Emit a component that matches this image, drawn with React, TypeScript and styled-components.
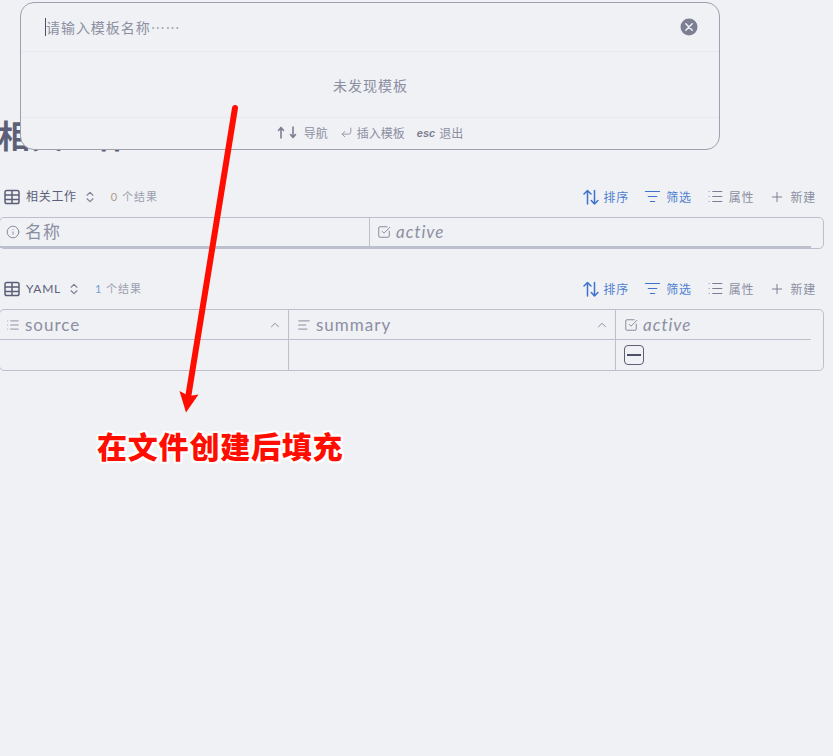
import React from "react";
import styled, { createGlobalStyle } from "styled-components";
import { ChevronsUpDown, ListFilter, List, Plus, Info, SquareCheckBig, AlignLeft, ChevronUp, CornerDownLeft } from "lucide-react";

const GlobalStyle = createGlobalStyle`
  html, body { margin: 0; padding: 0; background: #eff1f5; height: 100%; overflow: hidden; }
  body { font-family: "Lato", "Noto Sans CJK SC", sans-serif; color: #4c4f69; }
`;

const Page = styled.div`
  position: relative;
  width: 833px;
  height: 756px;
  overflow: hidden;
  background: #eff1f5;
`;

const Content = styled.main`
  display: flex;
  flex-direction: column;
  margin-left: -1px;
  margin-right: 9px;
  padding-top: 111px;
`;

const Heading = styled.h1`
  margin: 0 0 0 -1px;
  height: 47px;
  font: 700 32px/47px "Noto Sans CJK SC", sans-serif;
  letter-spacing: 1px;
  color: #5c5f77;
`;

const Toolbar = styled.div<{ $gap: number }>`
  display: flex;
  align-items: center;
  justify-content: space-between;
  height: 41px;
  margin-top: ${p => p.$gap}px;
  padding: 0 8px 0 5px;
`;

const ToolGroup = styled.div`
  display: flex;
  align-items: center;
`;

const ViewName = styled.span`
  margin-left: 6px;
  font: 400 12px/16px "Lato", "Noto Sans CJK SC", sans-serif;
  letter-spacing: 0.7px;
  color: #5c5f77;
`;

const Switcher = styled(ChevronsUpDown)`
  margin-left: 6px;
  color: #7c7f93;
`;

const Count = styled.span<{ $tint: string }>`
  margin-left: 14px;
  font: 400 11px/16px "Lato", "Noto Sans CJK SC", sans-serif;
  letter-spacing: 1px;
  color: #9ca0b0;
  & > b { font-weight: 400; color: ${p => p.$tint}; }
`;

const Action = styled.span<{ $active?: boolean; $gap: number }>`
  display: inline-flex;
  align-items: center;
  gap: 5px;
  margin-left: ${p => p.$gap}px;
  font: 400 12px/16px "Noto Sans CJK SC", sans-serif;
  letter-spacing: 0.8px;
  color: ${p => (p.$active ? "#4f7fd0" : "#8c8fa1")};
  & > svg { color: ${p => (p.$active ? "#3f72cc" : "#7c7f93")}; }
`;

const TableBox = styled.section`
  border: 1px solid #bcc0cc;
  border-radius: 5px;
  padding-right: 12px;
`;

const Row = styled.div<{ $cols: string; $h: number; $rule?: number }>`
  display: grid;
  grid-template-columns: ${p => p.$cols};
  height: ${p => p.$h}px;
  border-bottom: ${p => p.$rule ?? 0}px solid #bcc0cc;
`;

const HeaderCell = styled.div<{ $divider?: boolean; $inset?: number }>`
  display: flex;
  align-items: center;
  padding: 0 6px 0 ${p => p.$inset ?? 7}px;
  gap: 5px;
  border-right: ${p => (p.$divider ? "1px solid #bcc0cc" : "none")};
  color: #8c8fa1;
  font: 400 17px/22px "Lato", "Noto Sans CJK SC", sans-serif;
  letter-spacing: 1px;
  & > svg:first-child { color: #7c7f93; }
`;

const SortCaret = styled(ChevronUp)`
  margin-left: auto;
  color: #7c7f93;
`;

const ItalicLabel = styled.span`
  font-style: italic;
`;

const BodyCell = styled.div<{ $divider?: boolean }>`
  display: flex;
  align-items: center;
  padding-left: 8px;
  border-right: ${p => (p.$divider ? "1px solid #bcc0cc" : "none")};
`;

const MixedBox = styled.span`
  display: flex;
  align-items: center;
  justify-content: center;
  width: 18px;
  height: 18px;
  border: 1px solid #5c5f77;
  border-radius: 4px;
  &::before {
    content: "";
    width: 14px;
    height: 2px;
    background: #4c4f69;
  }
`;

const Modal = styled.div`
  position: absolute;
  left: 20px;
  top: 2px;
  width: 698px;
  height: 146px;
  display: flex;
  flex-direction: column;
  background: #eff1f5;
  border: 1px solid #9ca0b0;
  border-radius: 14px;
`;

const SearchRow = styled.div`
  display: flex;
  align-items: center;
  justify-content: space-between;
  height: 48px;
  padding: 0 21px 0 24px;
  border-bottom: 1px solid #e6e9ef;
`;

const Placeholder = styled.span`
  border-left: 1px solid #4c4f69;
  height: 18px;
  font: 400 14px/18px "Noto Sans CJK SC", sans-serif;
  letter-spacing: 0.95px;
  color: #8c8fa1;
`;

const EmptyRow = styled.div`
  display: flex;
  align-items: center;
  justify-content: center;
  height: 65px;
  padding-left: 1px;
  border-bottom: 1px solid #e6e9ef;
  font: 400 14px/20px "Noto Sans CJK SC", sans-serif;
  letter-spacing: 1px;
  color: #8c8fa1;
`;

const Hints = styled.div`
  flex: 1;
  display: flex;
  align-items: center;
  justify-content: center;
  gap: 12px;
  padding-bottom: 2px;
  font: 400 12px/14px "Noto Sans CJK SC", sans-serif;
  color: #8c8fa1;
`;

const Hint = styled.span`
  display: inline-flex;
  align-items: center;
  gap: 4px;
`;

const Keys = styled.svg`
  margin-right: 2px;
  color: #7c7f93;
`;

const EscKey = styled.b`
  font: italic 700 11px/14px "Liberation Sans", sans-serif;
  color: #7c7f93;
`;

const ArrowLayer = styled.svg`
  position: absolute;
  left: 0;
  top: 0;
  pointer-events: none;
`;

const Note = styled.div`
  position: absolute;
  left: 97px;
  top: 424px;
  font: 900 30px/42px "Noto Sans CJK SC", sans-serif;
  letter-spacing: 0.8px;
  white-space: nowrap;
  color: #ff0d00;
  text-shadow: 2px 0 0 #fff, -2px 0 0 #fff, 0 2px 0 #fff, 0 -2px 0 #fff, 2px 2px 0 #fff, -2px -2px 0 #fff, 2px -2px 0 #fff, -2px 2px 0 #fff;
`;

const TableIcon = () => (
  <svg width="16" height="16" viewBox="0 0 16 16" fill="none" stroke="#5c5f77" strokeWidth="1.5">
    <rect x="1" y="1.5" width="14" height="13" rx="1.8" />
    <path d="M1 6h14M1 10.5h14M8 1.5v13" />
  </svg>
);

const SortIcon = () => (
  <svg width="16" height="16" viewBox="0 0 16 16" fill="none" stroke="currentColor" strokeWidth="1.5" strokeLinecap="round" strokeLinejoin="round">
    <path d="M4.5 15V1.5M1 5 4.5 1.5 8 5" />
    <path d="M11.5 1.5V15M8.3 11.5l3.2 3.5 3.4-3.5" />
  </svg>
);

const ClearIcon = () => (
  <svg width="18" height="18" viewBox="0 0 18 18">
    <circle cx="9" cy="9" r="8.5" fill="#7c7f93" />
    <path d="M5.8 5.8l6.4 6.4M12.2 5.8l-6.4 6.4" stroke="#eff1f5" strokeWidth="1.5" strokeLinecap="round" />
  </svg>
);

const NavKeys = () => (
  <Keys width="21" height="13" viewBox="0 0 21 13" fill="none" stroke="currentColor" strokeWidth="1.6" strokeLinecap="round" strokeLinejoin="round">
    <path d="M4 12V1.5M1.5 4.5 4 1.5 6.5 4.5" />
    <path d="M16 1V11.5M13.5 8.5 16 11.5 18.5 8.5" />
  </Keys>
);

const Actions = () => (
  <ToolGroup>
    <Action $active $gap={0}><SortIcon />排序</Action>
    <Action $active $gap={15}><ListFilter size={17} strokeWidth={1.6} />筛选</Action>
    <Action $gap={15}><List size={17} strokeWidth={1.5} />属性</Action>
    <Action $gap={15}><Plus size={16} strokeWidth={1.5} />新建</Action>
  </ToolGroup>
);

export default function App() {
  return (
    <Page>
      <GlobalStyle />
      <Content>
        <Heading>相关工作</Heading>
        <Toolbar $gap={18}>
          <ToolGroup>
            <TableIcon />
            <ViewName>相关工作</ViewName>
            <Switcher size={14} />
            <Count $tint="#b59a86"><b>0</b> 个结果</Count>
          </ToolGroup>
          <Actions />
        </Toolbar>
        <TableBox>
          <Row $cols="370px 1fr" $h={28} $rule={2}>
            <HeaderCell $divider $inset={6}><Info size={14} strokeWidth={1.5} />名称</HeaderCell>
            <HeaderCell><SquareCheckBig size={14} strokeWidth={1.5} /><ItalicLabel>active</ItalicLabel></HeaderCell>
          </Row>
        </TableBox>
        <Toolbar $gap={19}>
          <ToolGroup>
            <TableIcon />
            <ViewName>YAML</ViewName>
            <Switcher size={14} />
            <Count $tint="#6f9fd0"><b>1</b> 个结果</Count>
          </ToolGroup>
          <Actions />
        </Toolbar>
        <TableBox>
          <Row $cols="289px 327px 1fr" $h={29} $rule={1}>
            <HeaderCell $divider $inset={6}><List size={14} strokeWidth={1.4} />source<SortCaret size={14} strokeWidth={1.5} /></HeaderCell>
            <HeaderCell $divider $inset={8}><AlignLeft size={14} strokeWidth={1.5} />summary<SortCaret size={14} strokeWidth={1.5} /></HeaderCell>
            <HeaderCell $inset={8}><SquareCheckBig size={14} strokeWidth={1.5} /><ItalicLabel>active</ItalicLabel></HeaderCell>
          </Row>
          <Row $cols="289px 327px 1fr" $h={30}>
            <BodyCell $divider />
            <BodyCell $divider />
            <BodyCell><MixedBox /></BodyCell>
          </Row>
        </TableBox>
      </Content>

      <Modal>
        <SearchRow>
          <Placeholder>请输入模板名称……</Placeholder>
          <ClearIcon />
        </SearchRow>
        <EmptyRow>未发现模板</EmptyRow>
        <Hints>
          <Hint><NavKeys />导航</Hint>
          <Hint><CornerDownLeft size={13} strokeWidth={1.6} />插入模板</Hint>
          <Hint><EscKey>esc</EscKey>退出</Hint>
        </Hints>
      </Modal>

      <ArrowLayer width="833" height="756" viewBox="0 0 833 756">
        <path d="M235 108 L188 398" stroke="#ff0d00" strokeWidth="6" strokeLinecap="round" fill="none" />
        <path d="M186 412.5 L179.5 391 L189 396 L198.5 394.5 Z" fill="#ff0d00" />
      </ArrowLayer>
      <Note>在文件创建后填充</Note>
    </Page>
  );
}
